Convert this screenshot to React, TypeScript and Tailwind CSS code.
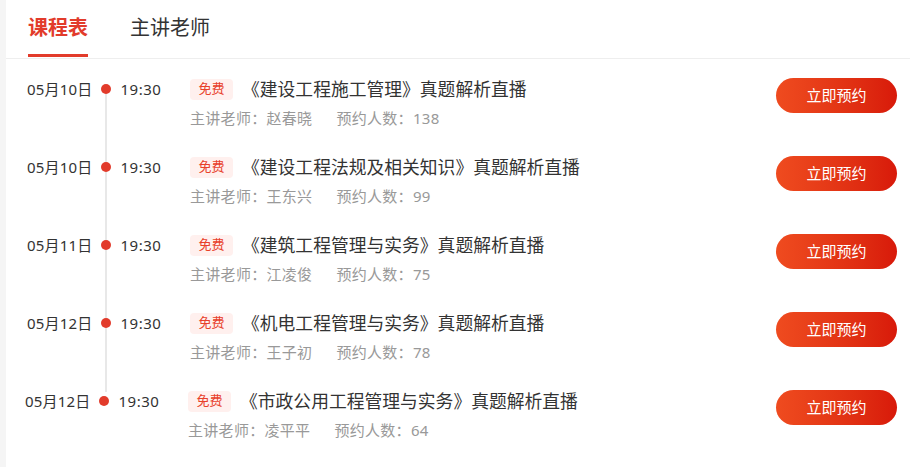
const courses = [
  { date: '05月10日', time: '19:30', title: '《建设工程施工管理》真题解析直播', teacher: '赵春晓', count: 138 },
  { date: '05月10日', time: '19:30', title: '《建设工程法规及相关知识》真题解析直播', teacher: '王东兴', count: 99 },
  { date: '05月11日', time: '19:30', title: '《建筑工程管理与实务》真题解析直播', teacher: '江凌俊', count: 75 },
  { date: '05月12日', time: '19:30', title: '《机电工程管理与实务》真题解析直播', teacher: '王子初', count: 78 },
  { date: '05月12日', time: '19:30', title: '《市政公用工程管理与实务》真题解析直播', teacher: '凌平平', count: 64 },
];

export default function App() {
  return (
    <div className="flex w-[910px] h-[467px] bg-white overflow-hidden font-['Noto_Sans','Noto_Sans_CJK_SC',sans-serif] text-[#333]">
      {/* left gutter */}
      <div className="w-[6px] shrink-0 bg-[#f5f5f5]" />

      <div className="flex-1 flex flex-col">
        {/* Tabs */}
        <div className="flex gap-[42px] pl-[22px] h-[59px] border-b border-[#eeeeee]">
          <div className="flex flex-col">
            <span className="mt-[17px] text-[20px] leading-[22px] font-bold text-[#e23b2b]">课程表</span>
            <span className="mt-auto mb-[1px] h-[3px] w-full bg-[#e23b2b]" />
          </div>
          <div className="flex flex-col">
            <span className="mt-[17px] text-[20px] leading-[22px] text-[#333]">主讲老师</span>
          </div>
        </div>

        {/* Schedule */}
        <div className="flex flex-col pt-[9px]">
          {courses.map((c, i) => {
            const last = i === courses.length - 1;
            return (
              <div key={i} className="flex h-[78px] pt-[10px] pr-[13px]">
                <div className={`flex w-[184px] shrink-0 h-[22px] items-center ${last ? 'pl-[19px]' : 'pl-[21px]'}`}>
                  <span className="text-[15px] tracking-[0.2px] whitespace-nowrap">{c.date}</span>
                  <span className="relative ml-[8px] w-[10px] h-[10px]">
                    {!last && (
                      <span
                        className={`absolute left-[4px] top-[5px] w-[2px] bg-[#e8e8e8] ${i === courses.length - 2 ? 'h-[69px]' : 'h-[78px]'}`}
                      />
                    )}
                    <span className="absolute inset-0 rounded-full bg-[#e23b2b]" />
                  </span>
                  <span className="ml-[10px] text-[15px] tracking-[0.5px]">{c.time}</span>
                </div>

                <div className={`flex-1 flex flex-col ${last ? '-ml-[2px]' : ''}`}>
                  <div className="flex items-center h-[22px]">
                    <span className="flex items-center justify-center w-[43px] h-[21px] rounded-[4px] bg-[#fff0ee] text-[13px] text-[#e8402a]">
                      免费
                    </span>
                    <span className="ml-[9px] text-[17.8px] whitespace-nowrap">{c.title}</span>
                  </div>
                  <div className="mt-[8px] flex gap-[24px] text-[15px] tracking-[0.3px] leading-[20px] text-[#999]">
                    <span>主讲老师：{c.teacher}</span>
                    <span>预约人数：{c.count}</span>
                  </div>
                </div>

                <button className="w-[121px] h-[35px] rounded-full bg-linear-to-r from-[#ef4b1f] to-[#d8190a] text-white text-[15px]">
                  立即预约
                </button>
              </div>
            );
          })}
        </div>
      </div>
    </div>
  );
}
